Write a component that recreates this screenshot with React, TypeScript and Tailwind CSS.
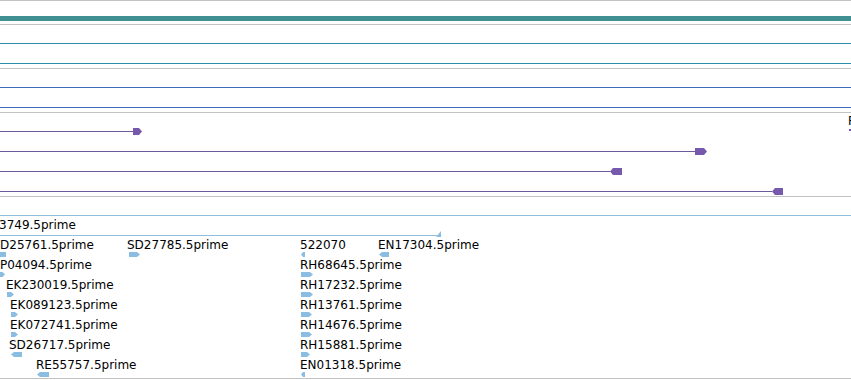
import type { CSSProperties } from "react";

type Dir = "right" | "left" | "none" | "flag";

type Glyph = { x: number; w: number; h: number; dir: Dir };
type Label = { x: number; text: string };
type Row = { labels: Label[]; glyphs: Glyph[] };

const BLUE = "#8bbde2";
const PURPLE = "#7658ad";

// transcript rows: line from 0 to glyph start, then the glyph
const transcripts = [
  { end: 133, w: 9, dir: "right" as Dir },
  { end: 695, w: 12, dir: "right" as Dir },
  { end: 610, w: 12, dir: "left" as Dir },
  { end: 772, w: 11, dir: "left" as Dir },
];

// EST rows, 20px apart; x is the genomic position on screen
const estRows: Row[] = [
  { labels: [{ x: -1, text: "3749.5prime" }], glyphs: [] },
  {
    labels: [
      { x: 0, text: "D25761.5prime" },
      { x: 127, text: "SD27785.5prime" },
      { x: 300, text: "522070" },
      { x: 378, text: "EN17304.5prime" },
    ],
    glyphs: [
      { x: 0, w: 6, h: 5, dir: "none" },
      { x: 129, w: 11, h: 5, dir: "right" },
      { x: 301, w: 4, h: 5, dir: "left" },
      { x: 379, w: 10, h: 5, dir: "left" },
    ],
  },
  {
    labels: [
      { x: 0, text: "P04094.5prime" },
      { x: 300, text: "RH68645.5prime" },
    ],
    glyphs: [
      { x: 0, w: 5, h: 5, dir: "right" },
      { x: 301, w: 12, h: 5, dir: "right" },
    ],
  },
  {
    labels: [
      { x: 6, text: "EK230019.5prime" },
      { x: 300, text: "RH17232.5prime" },
    ],
    glyphs: [
      { x: 7, w: 7, h: 5, dir: "right" },
      { x: 301, w: 12, h: 5, dir: "right" },
    ],
  },
  {
    labels: [
      { x: 10, text: "EK089123.5prime" },
      { x: 300, text: "RH13761.5prime" },
    ],
    glyphs: [
      { x: 11, w: 7, h: 5, dir: "right" },
      { x: 301, w: 11, h: 5, dir: "right" },
    ],
  },
  {
    labels: [
      { x: 10, text: "EK072741.5prime" },
      { x: 300, text: "RH14676.5prime" },
    ],
    glyphs: [
      { x: 11, w: 7, h: 5, dir: "right" },
      { x: 301, w: 11, h: 5, dir: "right" },
    ],
  },
  {
    labels: [
      { x: 9, text: "SD26717.5prime" },
      { x: 300, text: "RH15881.5prime" },
    ],
    glyphs: [
      { x: 11, w: 11, h: 5, dir: "left" },
      { x: 301, w: 9, h: 5, dir: "right" },
    ],
  },
  {
    labels: [
      { x: 36, text: "RE55757.5prime" },
      { x: 300, text: "EN01318.5prime" },
    ],
    glyphs: [
      { x: 37, w: 12, h: 5, dir: "left" },
      { x: 301, w: 4, h: 5, dir: "left" },
    ],
  },
];

function arrowPoints(w: number, h: number, dir: Dir) {
  const tip = Math.min(3, w / 2);
  if (dir === "right") return `0,0 ${w - tip},0 ${w},${h / 2} ${w - tip},${h} 0,${h}`;
  if (dir === "left") return `${tip},0 ${w},0 ${w},${h} ${tip},${h} 0,${h / 2}`;
  if (dir === "flag") return `0,${h} ${w},0 ${w},${h}`;
  return `0,0 ${w},0 ${w},${h} 0,${h}`;
}

function Arrow({
  w,
  h,
  dir,
  color,
  className,
  style,
}: {
  w: number;
  h: number;
  dir: Dir;
  color: string;
  className?: string;
  style?: CSSProperties;
}) {
  return (
    <svg className={className} style={style} width={w} height={h} viewBox={`0 0 ${w} ${h}`}>
      <polygon points={arrowPoints(w, h, dir)} fill={color} />
    </svg>
  );
}

function Divider() {
  return <div className="h-px w-full shrink-0 bg-[#c3c3c3]" />;
}

function LineTrack({ color }: { color: string }) {
  return (
    <div className="flex h-[43px] shrink-0 flex-col gap-[19px] pt-[18px]">
      <div className="h-px w-full" style={{ background: color }} />
      <div className="h-px w-full" style={{ background: color }} />
    </div>
  );
}

export default function App() {
  return (
    <div className="flex h-[380px] w-[851px] flex-col overflow-hidden bg-white font-['DejaVu_Sans',sans-serif] text-[12px] leading-[14px] text-black">
      <Divider />

      {/* coverage bar */}
      <div className="h-[23px] shrink-0 pt-[15px]">
        <div className="h-[5px] w-full bg-[#428f91]" />
      </div>
      <Divider />

      <LineTrack color="#2b8dab" />
      <Divider />

      <LineTrack color="#3d6bbb" />
      <Divider />

      {/* transcripts */}
      <div className="relative flex h-[83px] shrink-0 flex-col pt-[8px]">
        {transcripts.map((t, i) => (
          <div key={i} className="flex h-5 shrink-0 items-center">
            <div className="h-px bg-[#6b5a9e]" style={{ width: t.end }} />
            <Arrow w={t.w} h={7} dir={t.dir} color={PURPLE} className="shrink-0" />
          </div>
        ))}
        <span className="absolute left-[848px] top-[1px] whitespace-nowrap">R</span>
        <div className="absolute left-[849px] top-[16px] h-[2px] w-[2px] bg-[#7658ad]" />
      </div>
      <Divider />

      {/* ESTs */}
      <div className="flex h-[181px] shrink-0 flex-col pt-[18px]">
        <div className="h-px w-full bg-[#92bedd]" />
        <div className="flex flex-col pt-[2px]">
          {estRows.map((row, i) => (
            <div key={i} className="relative h-5 shrink-0">
              {i === 0 && (
                <>
                  <div className="absolute left-0 top-[17px] h-px w-[437px] bg-[#92bedd]" />
                  <Arrow w={5} h={6} dir="flag" color={BLUE} className="absolute left-[436px] top-[13px]" />
                </>
              )}
              {row.labels.map((l, j) => (
                <span key={j} className="absolute top-0 whitespace-nowrap" style={{ left: l.x }}>
                  {l.text}
                </span>
              ))}
              {row.glyphs.map((g, j) => (
                <Arrow
                  key={j}
                  w={g.w}
                  h={g.h}
                  dir={g.dir}
                  color={BLUE}
                  className="absolute top-[14px]"
                  style={{ left: g.x }}
                />
              ))}
            </div>
          ))}
        </div>
      </div>
      <Divider />
    </div>
  );
}
